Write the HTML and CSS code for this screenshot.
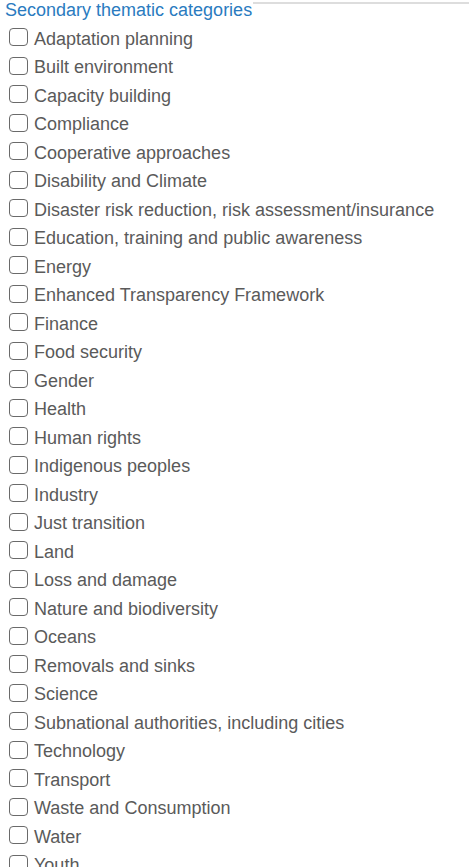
FILE: index.html
```html
<!DOCTYPE html>
<html>
<head>
<meta charset="utf-8">
<link rel="stylesheet" href="styles.css">
</head>
<body>
<div class="group">
  <div class="group-head">
    <span class="group-title">Secondary thematic categories</span>
    <span class="group-rule"></span>
  </div>
  <ul class="options">
    <li class="option"><span class="box"></span><span class="label">Adaptation planning</span></li>
    <li class="option"><span class="box"></span><span class="label">Built environment</span></li>
    <li class="option"><span class="box"></span><span class="label">Capacity building</span></li>
    <li class="option"><span class="box"></span><span class="label">Compliance</span></li>
    <li class="option"><span class="box"></span><span class="label">Cooperative approaches</span></li>
    <li class="option"><span class="box"></span><span class="label">Disability and Climate</span></li>
    <li class="option"><span class="box"></span><span class="label">Disaster risk reduction, risk assessment/insurance</span></li>
    <li class="option"><span class="box"></span><span class="label">Education, training and public awareness</span></li>
    <li class="option"><span class="box"></span><span class="label">Energy</span></li>
    <li class="option"><span class="box"></span><span class="label">Enhanced Transparency Framework</span></li>
    <li class="option"><span class="box"></span><span class="label">Finance</span></li>
    <li class="option"><span class="box"></span><span class="label">Food security</span></li>
    <li class="option"><span class="box"></span><span class="label">Gender</span></li>
    <li class="option"><span class="box"></span><span class="label">Health</span></li>
    <li class="option"><span class="box"></span><span class="label">Human rights</span></li>
    <li class="option"><span class="box"></span><span class="label">Indigenous peoples</span></li>
    <li class="option"><span class="box"></span><span class="label">Industry</span></li>
    <li class="option"><span class="box"></span><span class="label">Just transition</span></li>
    <li class="option"><span class="box"></span><span class="label">Land</span></li>
    <li class="option"><span class="box"></span><span class="label">Loss and damage</span></li>
    <li class="option"><span class="box"></span><span class="label">Nature and biodiversity</span></li>
    <li class="option"><span class="box"></span><span class="label">Oceans</span></li>
    <li class="option"><span class="box"></span><span class="label">Removals and sinks</span></li>
    <li class="option"><span class="box"></span><span class="label">Science</span></li>
    <li class="option"><span class="box"></span><span class="label">Subnational authorities, including cities</span></li>
    <li class="option"><span class="box"></span><span class="label">Technology</span></li>
    <li class="option"><span class="box"></span><span class="label">Transport</span></li>
    <li class="option"><span class="box"></span><span class="label">Waste and Consumption</span></li>
    <li class="option"><span class="box"></span><span class="label">Water</span></li>
    <li class="option"><span class="box"></span><span class="label">Youth</span></li>
  </ul>
</div>
</body>
</html>
```
FILE: styles.css
```css
html, body {
  margin: 0;
  padding: 0;
  background: #ffffff;
}
body {
  font-family: "Liberation Sans", Arial, sans-serif;
  overflow: hidden;
}
.group {
  padding-left: 5px;
}
.group-head {
  display: flex;
  align-items: flex-start;
  height: 25px;
}
.group-title {
  color: #2a7bbf;
  font-size: 18px;
  line-height: 22px;
  margin-top: -1px;
  white-space: nowrap;
}
.group-rule {
  flex: 1;
  border-top: 2px solid #dddddd;
  margin-top: 2px;
  margin-left: 1px;
}
.options {
  list-style: none;
  margin: 0;
  padding: 0 0 0 4px;
}
.option {
  display: flex;
  align-items: center;
  height: 28.5px;
}
.box {
  box-sizing: border-box;
  width: 19px;
  height: 18px;
  border: 1.5px solid #6a6a6a;
  border-radius: 4px;
  margin-right: 6px;
  margin-top: -4px;
  flex: none;
}
.label {
  color: #5a5a5a;
  font-size: 18px;
}
```
